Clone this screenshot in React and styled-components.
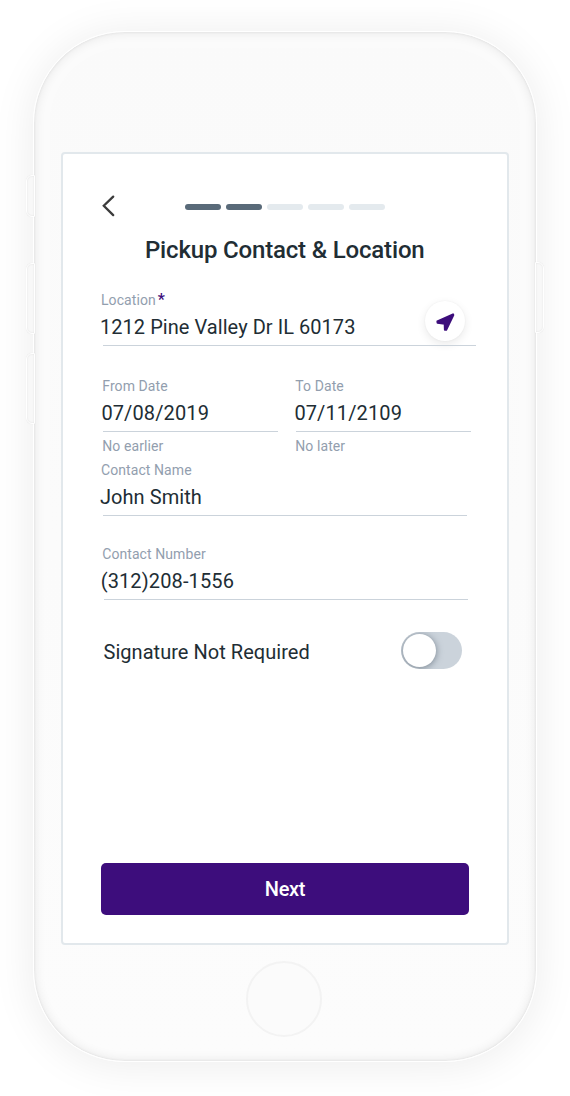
import React, { useState } from "react";
import styled, { createGlobalStyle } from "styled-components";

const GlobalStyle = createGlobalStyle`
  *, *::before, *::after { box-sizing: border-box; }
  body {
    margin: 0;
    background: #fff;
    font-family: Roboto, "Liberation Sans", sans-serif;
    color: #212d34;
  }
`;

const Stage = styled.main`
  width: 570px;
  height: 1096px;
  padding: 31px 33px 0;
  overflow: hidden;
`;

const Phone = styled.div`
  position: relative;
  width: 504px;
  height: 1031px;
  padding: 121px 28px 0;
  border: 1px solid #fff;
  border-radius: 92px;
  background: linear-gradient(#fafafa, #fcfcfc);
  box-shadow:
    0 3px 44px rgba(0, 0, 0, 0.08),
    inset 0 0 3px rgba(0, 0, 0, 0.09),
    inset 0 0 12px rgba(0, 0, 0, 0.09),
    inset 0 0 0 16px rgba(255, 255, 255, 0.2);
  display: flex;
  flex-direction: column;
  align-items: center;
`;

const SideKey = styled.span`
  position: absolute;
  top: ${(p) => p.$top}px;
  ${(p) => (p.$side === "left" ? "left: -8px;" : "right: -8px;")}
  width: 9px;
  height: ${(p) => p.$height}px;
  border: 1px solid #fff;
  border-radius: ${(p) => (p.$side === "left" ? "6px 0 0 6px" : "0 6px 6px 0")};
  background: #f8f8f8;
  box-shadow: inset 0 0 2px rgba(0, 0, 0, 0.1), 0 0 1px rgba(0, 0, 0, 0.1);
`;

const Screen = styled.section`
  flex: none;
  width: 448px;
  height: 793px;
  padding: 39px 30px 0 37px;
  border: 2px solid #e2e8ec;
  border-radius: 4px;
  background: #fff;
  display: flex;
  flex-direction: column;
  margin-top: -1px;
`;

const HomeButton = styled.div`
  flex: none;
  width: 76px;
  height: 76px;
  margin: 16px 2px 0 0;
  border: 2px solid #f3f3f3;
  border-radius: 50%;
  background: #fbfbfb;
`;

const Header = styled.header`
  display: flex;
  align-items: center;
  height: 26px;
`;

const BackButton = styled.button`
  display: flex;
  width: 85px;
  padding: 0;
  border: 0;
  background: none;
`;

const Steps = styled.div`
  display: grid;
  grid-template-columns: repeat(5, 1fr);
  gap: 5.5px;
  width: 200px;
  padding-top: 2px;
`;

const Step = styled.span`
  height: 6px;
  border-radius: 3px;
  background: ${(p) => (p.$done ? "#596a79" : "#e4eaee")};
`;

const Title = styled.h1`
  margin: 17px 0 28px;
  padding-right: 7.5px;
  font-size: 24px;
  font-weight: 500;
  line-height: 28px;
  letter-spacing: -0.17px;
  text-align: center;
  white-space: nowrap;
`;

const Field = styled.div`
  display: flex;
  flex-direction: column;
  width: ${(p) => p.$width}px;
  margin-bottom: ${(p) => p.$gap ?? 0}px;
`;

const Label = styled.label`
  height: 16px;
  padding-left: ${(p) => p.$inset}px;
  color: #929eae;
  font-size: 14px;
  line-height: 16px;
  letter-spacing: 0.08px;
  white-space: nowrap;
`;

const Required = styled.span`
  margin-left: 2px;
  color: #3c0d7b;
  font-weight: 500;
  font-size: 16px;
  line-height: 1;
`;

const ValueRow = styled.div`
  display: flex;
  justify-content: space-between;
  height: 30px;
  margin-top: 7px;
  padding-left: ${(p) => p.$inset}px;
`;

const Value = styled.span`
  font-size: 20px;
  line-height: 24px;
  letter-spacing: ${(p) => (p.$numeric ? 0.12 : 0.05)}px;
  white-space: nowrap;
`;

const Underline = styled.hr`
  width: auto;
  height: 1px;
  margin: 0 0 0 ${(p) => p.$inset}px;
  border: 0;
  background: #cbd3db;
`;

const Helper = styled(Label).attrs({ as: "small" })`
  margin-top: 6px;
`;

const LocateButton = styled.button`
  display: flex;
  align-items: center;
  justify-content: center;
  width: 40px;
  height: 40px;
  margin: -14px 11px 0 0;
  padding: 0;
  border: 0;
  border-radius: 50%;
  background: #fff;
  box-shadow: 0 3px 10px rgba(0, 0, 0, 0.09), 0 0 2px rgba(0, 0, 0, 0.05);
`;

const DateRow = styled.div`
  display: flex;
  gap: 15px;
  margin-bottom: 8px;
`;

const SwitchRow = styled.div`
  display: flex;
  align-items: center;
  justify-content: space-between;
  height: 37px;
  padding: 0 15px 0 3.5px;
`;

const SwitchLabel = styled.span`
  padding-top: 3px;
  font-size: 20px;
  line-height: 24px;
  letter-spacing: 0.04px;
`;

const Switch = styled.button`
  display: flex;
  align-items: center;
  justify-content: ${(p) => (p.$on ? "flex-end" : "flex-start")};
  width: 61px;
  height: 37px;
  padding: 0 2px;
  border: 0;
  border-radius: 19px;
  background: #cbd3db;
  overflow: hidden;
`;

const Knob = styled.span`
  width: 33px;
  height: 33px;
  border-radius: 50%;
  background: #fff;
  box-shadow: 0 1px 7px rgba(60, 75, 90, 0.6);
`;

const NextButton = styled.button`
  width: 368px;
  height: 52px;
  margin: 193.5px 0 0 1px;
  padding: 0;
  border: 0;
  border-radius: 5px;
  background: #3d0d7c;
  color: #fff;
  font-family: inherit;
  font-size: 20px;
  font-weight: 500;
  line-height: 52px;
  letter-spacing: -0.3px;
`;

function TextField({
  label,
  required,
  value,
  numeric,
  helper,
  width,
  gap,
  labelInset = 1,
  valueInset = 0,
  lineInset = 3,
  action,
}) {
  return (
    <Field $width={width} $gap={gap}>
      <Label $inset={labelInset}>
        {label}
        {required && <Required>*</Required>}
      </Label>
      <ValueRow $inset={valueInset}>
        <Value $numeric={numeric}>{value}</Value>
        {action}
      </ValueRow>
      <Underline $inset={lineInset} />
      {helper && <Helper $inset={labelInset}>{helper}</Helper>}
    </Field>
  );
}

const BackIcon = () => (
  <svg width="18" height="24" viewBox="0 0 18 24" fill="none">
    <path d="M13.2 2.6 3.8 11.8l9.4 9.3" stroke="#3c3c3c" strokeWidth="2.3" strokeLinecap="round" />
  </svg>
);

const LocateIcon = () => (
  <svg width="20" height="20" viewBox="0 0 20 20">
    <path
      d="M18 3.2 2.3 10.3 2.5 11.9 9.6 12.9 9.8 18.8 11.3 18.8 18.4 4Z"
      fill="#3c0d7b"
      stroke="#3c0d7b"
      strokeWidth="1.8"
      strokeLinejoin="round"
    />
  </svg>
);

export default function App() {
  const [signature, setSignature] = useState(false);

  return (
    <>
      <GlobalStyle />
      <Stage>
        <Phone>
          <SideKey $side="left" $top={143} $height={42} />
          <SideKey $side="left" $top={231} $height={71} />
          <SideKey $side="left" $top={321} $height={71} />
          <SideKey $side="right" $top={230} $height={71} />
          <Screen>
            <Header>
              <BackButton aria-label="Back">
                <BackIcon />
              </BackButton>
              <Steps>
                {[true, true, false, false, false].map((done, i) => (
                  <Step key={i} $done={done} />
                ))}
              </Steps>
            </Header>
            <Title>Pickup Contact &amp; Location</Title>
            <TextField
              label="Location"
              required
              value="1212 Pine Valley Dr IL 60173"
              width={376}
              gap={32}
              action={
                <LocateButton aria-label="Use my location">
                  <LocateIcon />
                </LocateButton>
              }
            />
            <DateRow>
              <TextField label="From Date" value="07/08/2019" numeric helper="No earlier" width={178} labelInset={2.3} valueInset={1.4} />
              <TextField label="To Date" value="07/11/2109" numeric helper="No later" width={178} labelInset={2.3} valueInset={1.4} />
            </DateRow>
            <TextField label="Contact Name" value="John Smith" width={367} gap={30} />
            <TextField
              label="Contact Number"
              value="(312)208-1556"
              numeric
              width={368}
              gap={32}
              labelInset={2.2}
              valueInset={0.7}
              lineInset={4}
            />
            <SwitchRow>
              <SwitchLabel>Signature Not Required</SwitchLabel>
              <Switch
                role="switch"
                aria-checked={signature}
                aria-label="Signature required"
                $on={signature}
                onClick={() => setSignature(!signature)}
              >
                <Knob />
              </Switch>
            </SwitchRow>
            <NextButton>Next</NextButton>
          </Screen>
          <HomeButton />
        </Phone>
      </Stage>
    </>
  );
}
